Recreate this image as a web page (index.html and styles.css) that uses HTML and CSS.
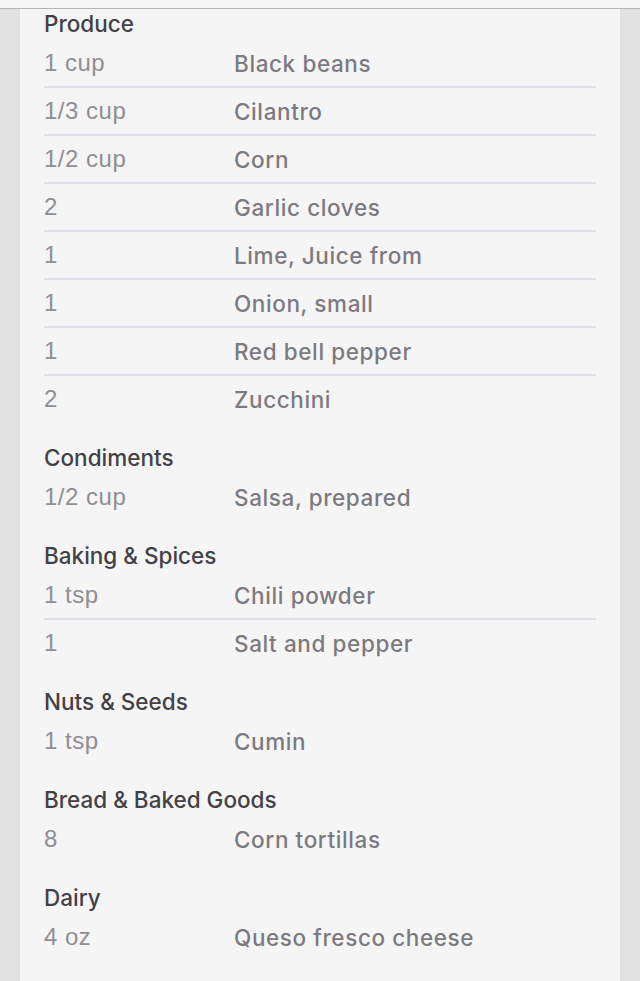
FILE: index.html
```html
<!DOCTYPE html>
<html>
<head>
    <title>Ingredients</title>
    <link rel="stylesheet" href="styles.css">
</head>
<body>
    <div class="topbar"></div>
    <div class="panel">
        <div class="recipe">
            <div class="section">
                <h2>Produce</h2>
                <div class="row"><span class="qty">1 cup</span><span class="name">Black beans</span></div>
                <div class="row"><span class="qty">1/3 cup</span><span class="name">Cilantro</span></div>
                <div class="row"><span class="qty">1/2 cup</span><span class="name">Corn</span></div>
                <div class="row"><span class="qty">2</span><span class="name">Garlic cloves</span></div>
                <div class="row"><span class="qty">1</span><span class="name">Lime, Juice from</span></div>
                <div class="row"><span class="qty">1</span><span class="name">Onion, small</span></div>
                <div class="row"><span class="qty">1</span><span class="name">Red bell pepper</span></div>
                <div class="row"><span class="qty">2</span><span class="name">Zucchini</span></div>
            </div>
            <div class="section">
                <h2>Condiments</h2>
                <div class="row"><span class="qty">1/2 cup</span><span class="name">Salsa, prepared</span></div>
            </div>
            <div class="section">
                <h2>Baking &amp; Spices</h2>
                <div class="row"><span class="qty">1 tsp</span><span class="name">Chili powder</span></div>
                <div class="row"><span class="qty">1</span><span class="name">Salt and pepper</span></div>
            </div>
            <div class="section">
                <h2>Nuts &amp; Seeds</h2>
                <div class="row"><span class="qty">1 tsp</span><span class="name">Cumin</span></div>
            </div>
            <div class="section">
                <h2>Bread &amp; Baked Goods</h2>
                <div class="row"><span class="qty">8</span><span class="name">Corn tortillas</span></div>
            </div>
            <div class="section">
                <h2>Dairy</h2>
                <div class="row"><span class="qty">4 oz</span><span class="name">Queso fresco cheese</span></div>
            </div>
        </div>
    </div>
</body>
</html>
```

FILE: styles.css
```css
html,
body {
    height: 100%;
}

body {
    margin: 0;
    display: flex;
    flex-direction: column;
    overflow: hidden;
    background-color: #e1e1e1; /* grey side strips */
    font-family: "Liberation Sans", Arial, sans-serif;
}

.topbar {
    height: 8px;
    flex-shrink: 0;
    background-color: #f7f7f7;
    border-bottom: 1px solid #b4b4b4;
}

.panel {
    flex: 1;
    margin: 0 20px;
    padding: 0 24px;
    background-color: #f5f5f6;
}

.recipe {
    margin-top: -1px;
}

.section + .section {
    margin-top: 18px;
}

h2 {
    margin: 0;
    height: 32px;
    line-height: 32px;
    font-family: Inter, "Liberation Sans", sans-serif;
    font-size: 22.5px;
    font-weight: 500;
    color: #434146;
}

.row {
    display: grid;
    grid-template-columns: 190px 1fr;
    align-items: center;
    height: 48px;
    box-sizing: border-box;
    border-bottom: 2px solid #e0dde5;
}

.row:last-child {
    border-bottom-color: transparent;
}

.qty {
    font-family: "Liberation Sans", Arial, sans-serif;
    font-size: 24px;
    letter-spacing: 0.5px;
    color: #908e93;
}

.name {
    font-family: Inter, "Liberation Sans", sans-serif;
    font-weight: 500;
    font-size: 22.5px;
    letter-spacing: 0.6px;
    color: #7c7a7f;
}
```
